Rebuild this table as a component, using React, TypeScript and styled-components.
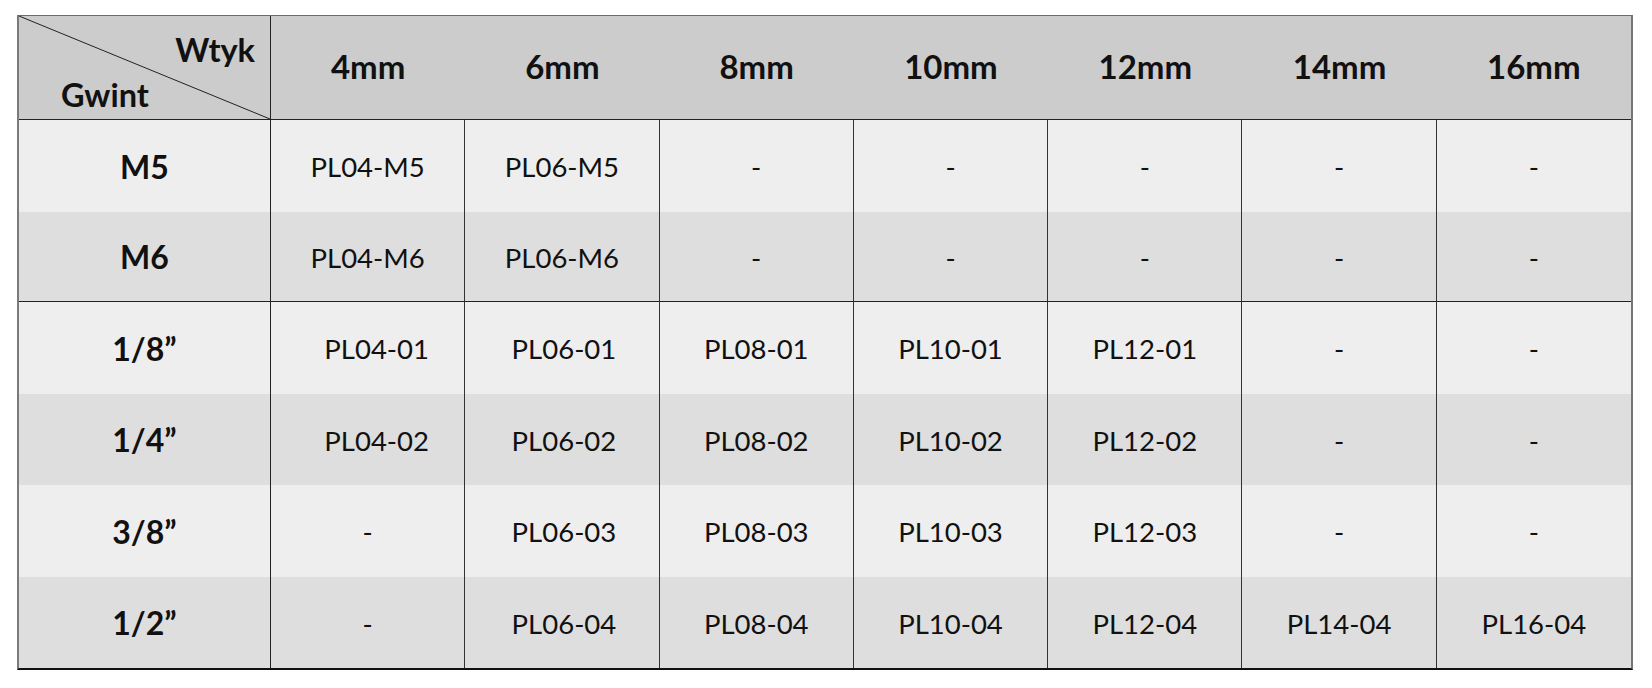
import React from "react";
import styled, { createGlobalStyle } from "styled-components";

const GlobalStyle = createGlobalStyle`
  html, body { margin: 0; padding: 0; background: #ffffff; }
  body { font-family: Lato, "Open Sans", "Liberation Sans", sans-serif; color: #111; }
`;

const COLS = "252px repeat(7, 1fr)";

const Page = styled.div`
  padding: 15px 0 0 17px;
  width: 1652px;
  height: 688px;
  box-sizing: border-box;
`;

const Table = styled.div`
  width: 1616px;
  display: flex;
  flex-direction: column;
  box-sizing: border-box;
  border-top: 1px solid #6a6a6a;
  border-left: 2px solid #7a7a7a;
  border-right: 2px solid #757575;
  border-bottom: 2px solid #111;
`;

const Row = styled.div<{ $h: number; $bg: string; $line?: boolean }>`
  display: grid;
  grid-template-columns: ${COLS};
  height: ${(p) => p.$h}px;
  box-sizing: border-box;
  background: ${(p) => p.$bg};
  border-bottom: ${(p) => (p.$line ? "1px solid #222" : "none")};
`;

const Corner = styled.div`
  position: relative;
  border-right: 1px solid #222;
  display: flex;
  flex-direction: column;
  justify-content: space-between;
  padding: 18px 15px 8px 42px;
  box-sizing: border-box;
  font-weight: 700;
  font-size: 32.5px;
  line-height: 1;
`;

const Diagonal = styled.svg`
  position: absolute;
  inset: 0;
  width: 100%;
  height: 100%;
  pointer-events: none;
`;

const CornerTop = styled.span`
  align-self: flex-end;
`;

const CornerBottom = styled.span`
  align-self: flex-start;
`;

const HeadCell = styled.div`
  display: flex;
  align-items: center;
  justify-content: center;
  font-weight: 700;
  font-size: 33px;
  padding-bottom: 3px;
`;

const RowHead = styled.div`
  display: flex;
  align-items: center;
  justify-content: center;
  font-weight: 700;
  font-size: 32px;
  border-right: 1px solid #222;
  padding-top: 0px;
`;

const Cell = styled.div<{ $last?: boolean; $shift?: number }>`
  display: flex;
  align-items: center;
  justify-content: center;
  font-size: 27.5px;
  font-weight: 400;
  border-right: ${(p) => (p.$last ? "none" : "1px solid #333")};
  padding-left: ${(p) => (p.$shift ?? 0) * 2}px;
  padding-top: 1px;
`;

const sizes = ["4mm", "6mm", "8mm", "10mm", "12mm", "14mm", "16mm"];

type RowData = { label: string; h: number; bg: string; line?: boolean; cells: string[]; shift?: number[] };

const rows: RowData[] = [
  { label: "M5", h: 92, bg: "#eeeeee", cells: ["PL04-M5", "PL06-M5", "-", "-", "-", "-", "-"] },
  { label: "M6", h: 90, bg: "#dedede", line: true, cells: ["PL04-M6", "PL06-M6", "-", "-", "-", "-", "-"] },
  { label: "1/8”", h: 92, bg: "#eeeeee", cells: ["PL04-01", "PL06-01", "PL08-01", "PL10-01", "PL12-01", "-", "-"], shift: [9, 2] },
  { label: "1/4”", h: 91, bg: "#dedede", cells: ["PL04-02", "PL06-02", "PL08-02", "PL10-02", "PL12-02", "-", "-"], shift: [9, 2] },
  { label: "3/8”", h: 92, bg: "#eeeeee", cells: ["-", "PL06-03", "PL08-03", "PL10-03", "PL12-03", "-", "-"], shift: [0, 2] },
  { label: "1/2”", h: 91, bg: "#dedede", cells: ["-", "PL06-04", "PL08-04", "PL10-04", "PL12-04", "PL14-04", "PL16-04"], shift: [0, 2] },
];

export default function App() {
  return (
    <>
      <GlobalStyle />
      <Page>
        <Table>
          <Row $h={104} $bg="#cccccc" $line>
            <Corner>
              <Diagonal viewBox="0 0 100 100" preserveAspectRatio="none">
                <line x1="0" y1="0" x2="100" y2="100" stroke="#222" strokeWidth="1" vectorEffect="non-scaling-stroke" />
              </Diagonal>
              <CornerTop>Wtyk</CornerTop>
              <CornerBottom>Gwint</CornerBottom>
            </Corner>
            {sizes.map((s) => (
              <HeadCell key={s}>{s}</HeadCell>
            ))}
          </Row>
          {rows.map((r) => (
            <Row key={r.label} $h={r.h} $bg={r.bg} $line={r.line}>
              <RowHead>{r.label}</RowHead>
              {r.cells.map((c, i) => (
                <Cell key={i} $last={i === r.cells.length - 1} $shift={r.shift?.[i]}>
                  {c}
                </Cell>
              ))}
            </Row>
          ))}
        </Table>
      </Page>
    </>
  );
}
